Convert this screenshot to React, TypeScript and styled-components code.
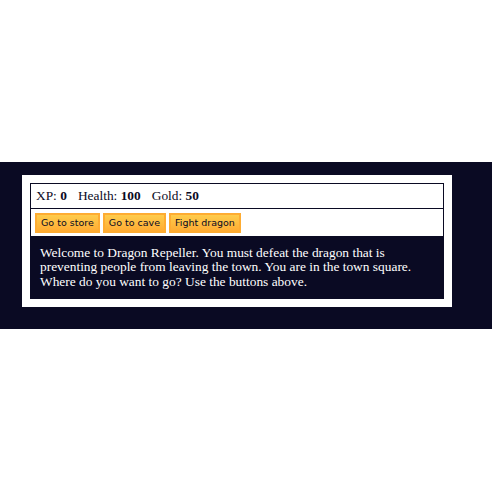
import styled, { createGlobalStyle } from 'styled-components'

const GlobalStyle = createGlobalStyle`
  html, body {
    margin: 0;
    padding: 0;
    background: #ffffff;
  }
`

const Band = styled.div`
  margin-top: 162px;
  padding: 13px 0 22px;
  background-color: #0a0a23;
`

const Game = styled.div`
  box-sizing: border-box;
  width: 430px;
  margin-left: 22px;
  padding: 8px;
  background-color: #ffffff;
  font-family: 'Liberation Serif', 'Times New Roman', serif;
  font-size: 13.4px;
  line-height: 14.7px;
`

const Panel = styled.div`
  border: 1px solid #0a0a23;
  padding: 4px;
  color: #0a0a23;
`

const Stats = styled(Panel)`
  padding: 5px 5px 4px 5px;
`

const Stat = styled.span`
  padding-right: 11px;
`

const Controls = styled(Panel)`
  display: flex;
  gap: 3px;
  border-top: none;
  padding: 4px 4px 3px;
`

const Button = styled.button`
  cursor: pointer;
  height: 20px;
  padding: 0 4px;
  font-family: 'DejaVu Sans', Verdana, sans-serif;
  font-size: 9.5px;
  color: #0a0a23;
  background-color: #feac32;
  background-image: linear-gradient(#fecc4c, #ffac33);
  border: 2px solid #feac32;
`

const Text = styled.div`
  padding: 9px 10px;
  background-color: #0a0a23;
  color: #ffffff;
`

export default function App() {
  return (
    <>
      <GlobalStyle />
      <Band>
        <Game>
          <Stats>
            <Stat>XP: <strong>0</strong></Stat>
            <Stat>Health: <strong>100</strong></Stat>
            <Stat>Gold: <strong>50</strong></Stat>
          </Stats>
          <Controls>
            <Button>Go to store</Button>
            <Button>Go to cave</Button>
            <Button>Fight dragon</Button>
          </Controls>
          <Text>
            Welcome to Dragon Repeller. You must defeat the dragon that is
            preventing people from leaving the town. You are in the town square.
            Where do you want to go? Use the buttons above.
          </Text>
        </Game>
      </Band>
    </>
  )
}
